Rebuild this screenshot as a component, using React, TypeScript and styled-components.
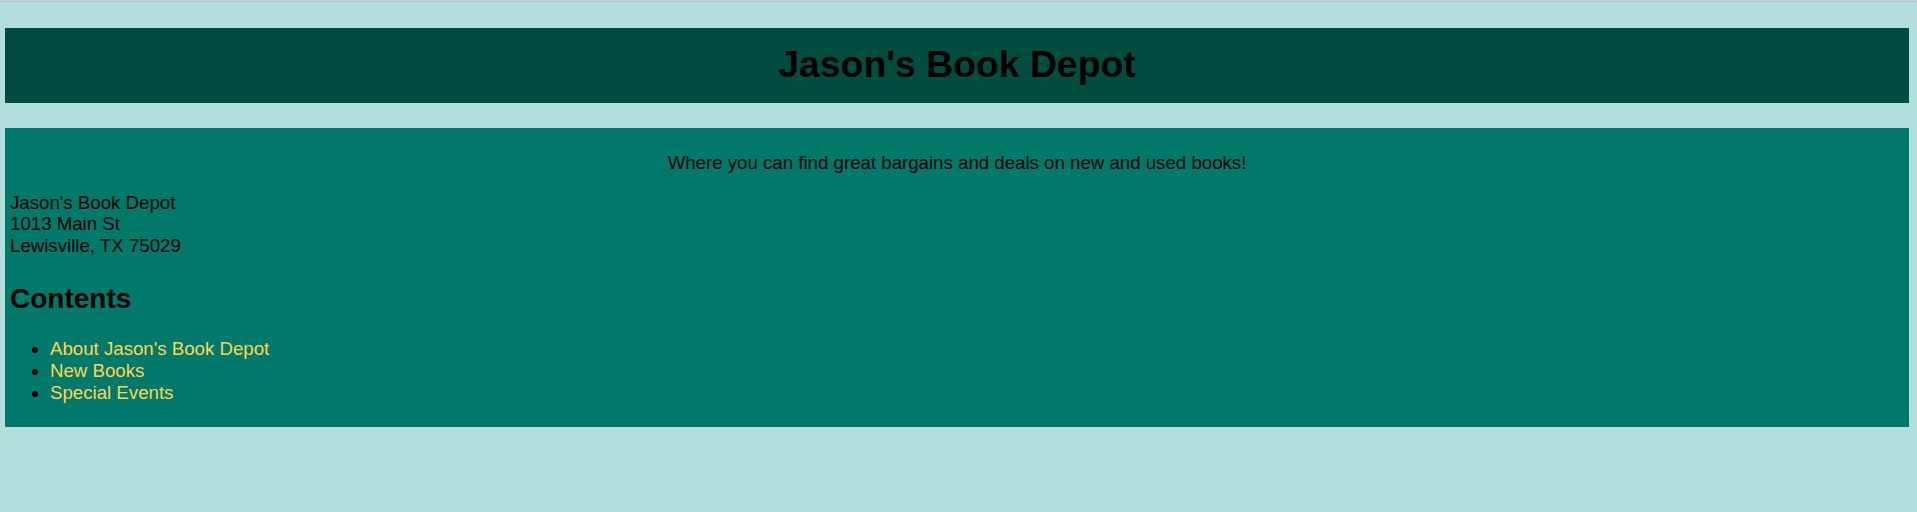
import React from "react";
import styled, { createGlobalStyle } from "styled-components";

const GlobalStyle = createGlobalStyle`
  html, body {
    margin: 0;
    padding: 0;
    background: #b2dfdb;
  }
  body {
    font-family: "Liberation Sans", Arial, sans-serif;
    color: #000;
  }
`;

const TopRule = styled.div`
  height: 1px;
  margin-top: 1px;
  background: #bdbdbd;
`;

const Page = styled.div`
  padding: 26px 8px 0 5px;
`;

const Header = styled.header`
  background: #004d40;
  padding: 14px 0 17px;
`;

const Title = styled.h1`
  margin: 0;
  text-align: center;
  font-size: 37.33px;
  line-height: 44px;
  font-weight: 700;
`;

const Main = styled.main`
  margin-top: 25px;
  background: #00796b;
  padding: 24px 5px 23px;
  font-size: 18.67px;
  line-height: 21.7px;
`;

const Tagline = styled.p`
  margin: 0;
  text-align: center;
`;

const Address = styled.address`
  margin-top: 18px;
  font-style: normal;
`;

const SectionTitle = styled.h2`
  margin: 26px 0 23px;
  font-size: 28px;
  line-height: 32px;
  font-weight: 700;
`;

const LinkList = styled.ul`
  margin: 0;
  padding-left: 40px;
  line-height: 22px;
`;

const NavLink = styled.a`
  color: #ffd54f;
  text-decoration: none;
`;

const links = ["About Jason's Book Depot", "New Books", "Special Events"];

export default function App() {
  return (
    <>
      <GlobalStyle />
      <TopRule />
      <Page>
        <Header>
          <Title>Jason's Book Depot</Title>
        </Header>
        <Main>
          <Tagline>
            Where you can find great bargains and deals on new and used books!
          </Tagline>
          <Address>
            Jason's Book Depot
            <br />
            1013 Main St
            <br />
            Lewisville, TX 75029
          </Address>
          <SectionTitle>Contents</SectionTitle>
          <LinkList>
            {links.map((l) => (
              <li key={l}>
                <NavLink href="#">{l}</NavLink>
              </li>
            ))}
          </LinkList>
        </Main>
      </Page>
    </>
  );
}
